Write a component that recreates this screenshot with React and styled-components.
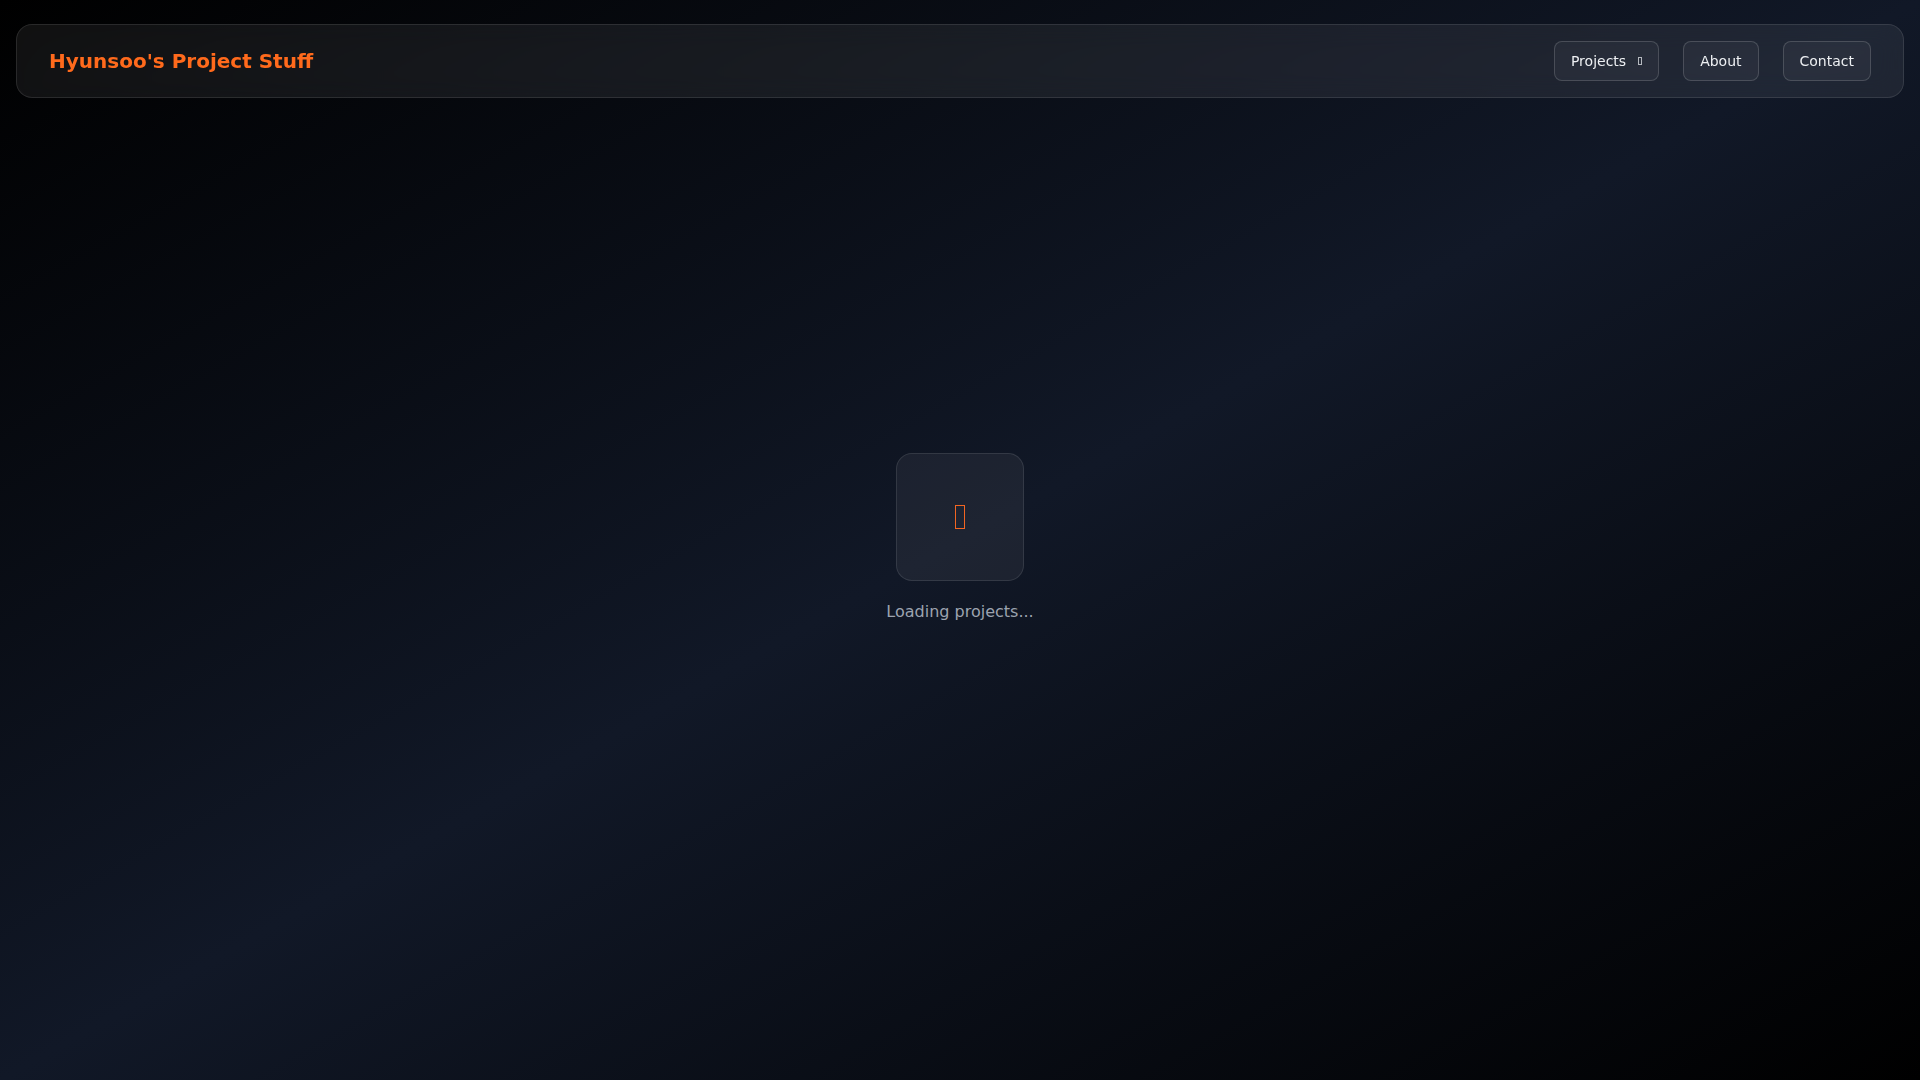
import React from "react";
import styled, { createGlobalStyle } from "styled-components";

const GlobalStyle = createGlobalStyle`
  html, body {
    margin: 0;
    padding: 0;
  }
  body {
    font-family: "DejaVu Sans", "Noto Sans", sans-serif;
    background: #000;
    color: #e5e7eb;
  }
  * { box-sizing: border-box; }
`;

const Page = styled.div`
  min-height: 100vh;
  background: linear-gradient(to bottom right, #000000 0%, #111827 50%, #000000 100%);
  display: flex;
  flex-direction: column;
`;

const NavBar = styled.header`
  position: fixed;
  top: 24px;
  left: 16px;
  right: 16px;
  height: 74px;
  display: flex;
  align-items: center;
  justify-content: space-between;
  padding: 0 32px 0 32px;
  background: rgba(255, 255, 255, 0.065);
  border: 1px solid rgba(255, 255, 255, 0.1);
  border-radius: 16px;
  backdrop-filter: blur(12px);
  z-index: 10;
`;

const Brand = styled.a`
  font-size: 20px;
  font-weight: 700;
  color: #ff6a1c;
  text-decoration: none;
  line-height: 28px;
`;

const NavLinks = styled.nav`
  display: flex;
  align-items: center;
  gap: 24px;
`;

const NavButton = styled.button`
  display: inline-flex;
  align-items: center;
  height: 40px;
  padding: 0 16px;
  font-family: inherit;
  font-size: 14px;
  line-height: 20px;
  color: #eef0f3;
  background: rgba(255, 255, 255, 0.04);
  border: 1px solid rgba(255, 255, 255, 0.16);
  border-radius: 8px;
  cursor: pointer;
`;

const Caret = styled.span`
  display: inline-block;
  width: 4px;
  height: 8px;
  margin-left: 12px;
  border: 1px solid rgba(230, 232, 236, 0.75);
`;

const Main = styled.main`
  flex: 1;
  min-height: 100vh;
  padding-bottom: 2px;
  display: flex;
  flex-direction: column;
  align-items: center;
  justify-content: center;
`;

const SpinnerCard = styled.div`
  width: 128px;
  height: 128px;
  display: flex;
  align-items: center;
  justify-content: center;
  background: rgba(255, 255, 255, 0.055);
  border: 1px solid rgba(255, 255, 255, 0.1);
  border-radius: 16px;
`;

const SpinnerGlyph = styled.span`
  display: block;
  width: 10px;
  height: 24px;
  border: 1.5px solid #f26522;
`;

const LoadingText = styled.p`
  margin: 17px 0 0;
  font-size: 16px;
  line-height: 28px;
  color: #9ca3af;
`;

export default function App() {
  return (
    <>
      <GlobalStyle />
      <Page>
        <NavBar>
          <Brand href="#">Hyunsoo's Project Stuff</Brand>
          <NavLinks>
            <NavButton>
              Projects
              <Caret />
            </NavButton>
            <NavButton>About</NavButton>
            <NavButton>Contact</NavButton>
          </NavLinks>
        </NavBar>
        <Main>
          <SpinnerCard>
            <SpinnerGlyph />
          </SpinnerCard>
          <LoadingText>Loading projects...</LoadingText>
        </Main>
      </Page>
    </>
  );
}
